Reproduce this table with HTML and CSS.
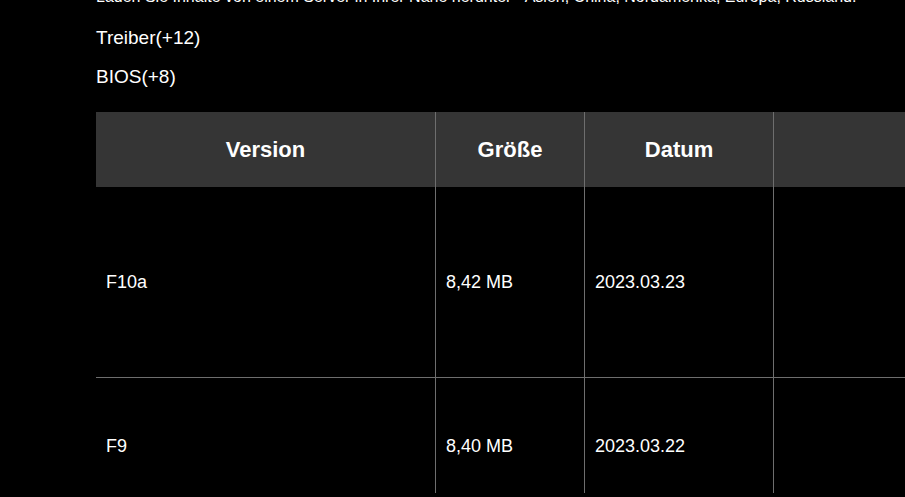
FILE: index.html
```html
<!DOCTYPE html>
<html lang="de">
<head>
<meta charset="utf-8">
<link rel="stylesheet" href="styles.css">
</head>
<body>
<div class="page">
  <p class="intro">Laden Sie Inhalte von einem Server in Ihrer Nähe herunter - Asien, China, Nordamerika, Europa, Russland.</p>
  <p class="cat first">Treiber(+12)</p>
  <p class="cat">BIOS(+8)</p>
  <div class="table-wrap">
    <table class="dl">
      <thead>
        <tr>
          <th class="c-ver">Version</th>
          <th class="c-size">Größe</th>
          <th class="c-date">Datum</th>
          <th class="c-act"></th>
        </tr>
      </thead>
      <tbody>
        <tr class="r1">
          <td>F10a</td>
          <td>8,42 MB</td>
          <td>2023.03.23</td>
          <td></td>
        </tr>
        <tr class="r2">
          <td>F9</td>
          <td>8,40 MB</td>
          <td>2023.03.22</td>
          <td></td>
        </tr>
      </tbody>
    </table>
  </div>
</div>
</body>
</html>
```
FILE: styles.css
```css
html, body {
  margin: 0;
  padding: 0;
  background: #000;
  overflow: hidden;
}
body {
  width: 905px;
  height: 497px;
  font-family: "Liberation Sans", Arial, sans-serif;
  color: #fff;
}
.page {
  padding-left: 96px;
  margin-top: -13px;
}
.intro {
  margin: 0;
  font-size: 16px;
  line-height: 20px;
  white-space: nowrap;
}
.cat {
  margin: 17px 0 0;
  font-size: 19px;
  line-height: 22px;
}
.cat.first {
  margin-top: 20px;
}
.table-wrap {
  margin-top: 24px;
  height: 381px;
  overflow: hidden;
}
.dl {
  border-collapse: collapse;
  table-layout: fixed;
  width: 1000px;
}
.dl th {
  background: #353535;
  height: 75px;
  padding: 0;
  font-size: 22px;
  font-weight: bold;
  text-align: center;
  border-right: 1px solid #6e6e6e;
}
.dl td {
  padding: 0 0 0 10px;
  font-size: 18px;
  text-align: left;
  border-right: 1px solid #6e6e6e;
  vertical-align: middle;
}
.dl th:last-child, .dl td:last-child {
  border-right: none;
}
.c-ver { width: 339px; }
.c-size { width: 148px; }
.c-date { width: 188px; }
.r1 td {
  height: 190px;
  border-bottom: 1px solid #6e6e6e;
}
.r2 td {
  height: 137px;
}
```
